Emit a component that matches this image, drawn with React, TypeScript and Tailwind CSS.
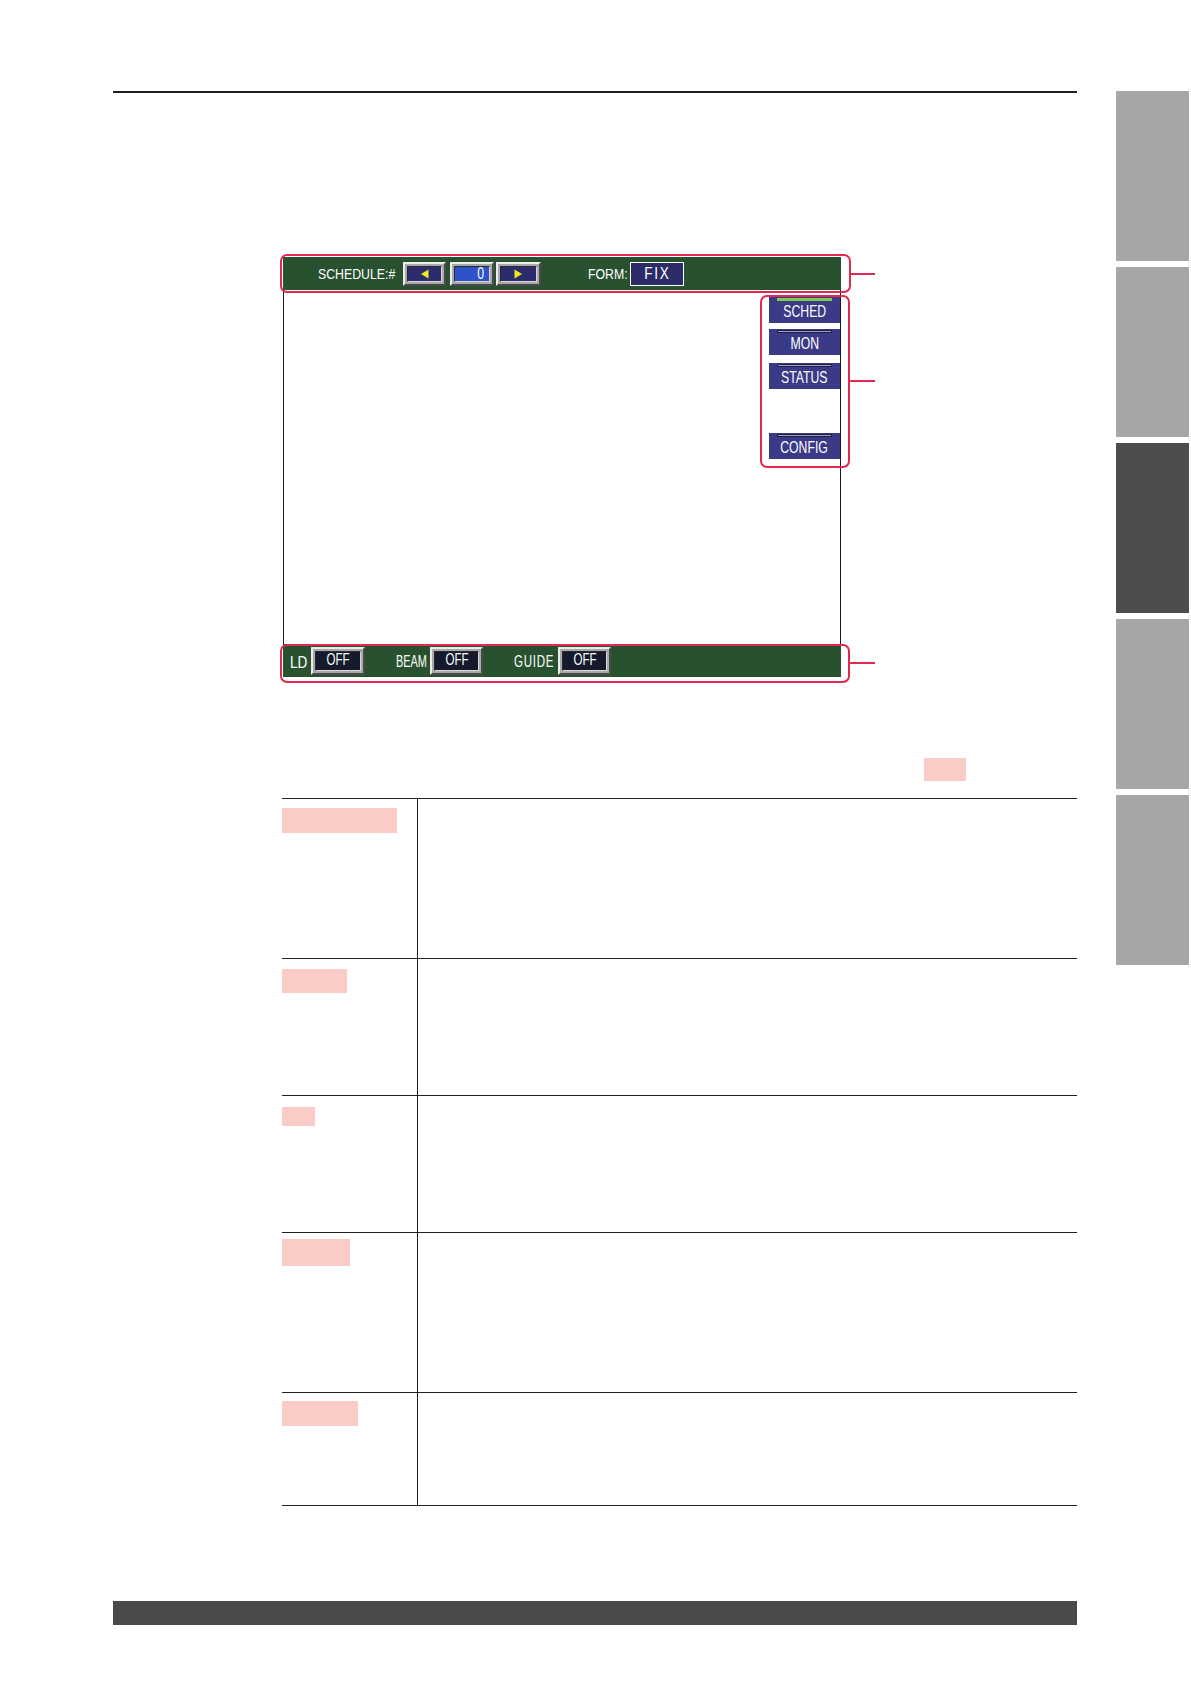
import React from "react";

const font = "font-['Liberation_Sans',Arial,sans-serif]";

function Tri({ dir }: { dir: "l" | "r" }) {
  return (
    <svg width="9" height="10" viewBox="0 0 9 10">
      {dir === "l" ? (
        <polygon points="8.5,0.5 8.5,9.5 1,5" fill="#ecec1e" />
      ) : (
        <polygon points="0.5,0.5 0.5,9.5 8,5" fill="#ecec1e" />
      )}
    </svg>
  );
}

function Bevel({
  className,
  innerClass,
  children,
}: {
  className: string;
  innerClass: string;
  children?: React.ReactNode;
}) {
  return (
    <div
      className={`flex border-2 border-t-[#ececec] border-l-[#ececec] border-b-[#4a4a4a] border-r-[#4a4a4a] bg-[#a9a9a9] p-[2px] ${className}`}
    >
      <div
        className={`flex flex-1 items-center border border-t-[#2a2a2a] border-l-[#2a2a2a] border-b-[#d8d8d8] border-r-[#d8d8d8] ${innerClass}`}
      >
        {children}
      </div>
    </div>
  );
}

function SideBtn({
  label,
  active,
  className,
}: {
  label: string;
  active?: boolean;
  className: string;
}) {
  return (
    <div
      className={`flex h-[26px] w-[71px] flex-col items-center bg-[#3a3a86] pt-[1px] ${className}`}
    >
      <div
        className={
          active
            ? "h-[3px] w-[55px] bg-[#7fcb52]"
            : "h-[3px] w-[55px] border border-[#1c1c48] bg-[#a3a7ba]"
        }
      />
      <span className="mt-[2px] inline-block scale-x-[0.72] text-[17px] leading-none text-white">
        {label}
      </span>
    </div>
  );
}

function Off({ className }: { className: string }) {
  return (
    <Bevel className={`h-[28px] ${className}`} innerClass="justify-center bg-[#151a2c]">
      <span className="mb-[3px] inline-block scale-x-[0.68] text-[17px] leading-none text-white">
        OFF
      </span>
    </Bevel>
  );
}

export default function App() {
  const rows = [
    { h: "h-[160px]", label: "mt-[9px] h-[25px] w-[115px]" },
    { h: "h-[137px]", label: "mt-[10px] h-[24px] w-[65px]" },
    { h: "h-[137px]", label: "mt-[11px] h-[19px] w-[33px]" },
    { h: "h-[160px]", label: "mt-[6px] h-[27px] w-[68px]" },
    { h: "h-[113px]", label: "mt-[8px] h-[25px] w-[76px]" },
  ];
  return (
    <div className={`flex min-h-[1684px] w-[1191px] bg-white ${font}`}>
      {/* main column */}
      <div className="ml-[113px] flex w-[964px] flex-col pt-[91px]">
        <div className="h-[2px] w-full bg-[#231f20]" />

        {/* screen */}
        <div className="relative ml-[170px] mt-[164px] w-[558px]">
          <div className="flex h-[33px] items-center bg-[#28522f] text-white">
            <div className="ml-[35px] w-[85px]">
              <span className="inline-block origin-left scale-x-[0.82] text-[15px] leading-none">
                SCHEDULE:#
              </span>
            </div>
            <Bevel className="h-[24px] w-[43px]" innerClass="justify-center bg-[#2b2b6e]">
              <Tri dir="l" />
            </Bevel>
            <Bevel className="ml-[4px] h-[24px] w-[44px]" innerClass="justify-end bg-[#2f52c8] pr-[4px]">
              <span className="inline-block scale-x-[0.72] text-[17px] leading-none text-white">0</span>
            </Bevel>
            <Bevel className="ml-[2px] h-[24px] w-[45px]" innerClass="justify-center bg-[#2b2b6e]">
              <Tri dir="r" />
            </Bevel>
            <div className="ml-[47px] w-[42px]">
              <span className="inline-block origin-left scale-x-[0.82] text-[15px] leading-none">
                FORM:
              </span>
            </div>
            <div className="flex h-[24px] w-[54px] items-center justify-center border border-white bg-[#2b2b68]">
              <span className="inline-block scale-x-[0.85] text-[16px] leading-none tracking-[2px]">FIX</span>
            </div>
          </div>

          <div className="flex h-[354px] justify-end border-x border-[#1a1a1a] bg-white">
            <div className="flex w-[71px] flex-col pt-[7px]">
              <SideBtn label="SCHED" active className="" />
              <SideBtn label="MON" className="mt-[6px]" />
              <SideBtn label="STATUS" className="mt-[8px]" />
              <SideBtn label="CONFIG" className="mt-[44px]" />
            </div>
          </div>

          <div className="flex h-[33px] items-center bg-[#28522f] text-white">
            <div className="ml-[7px] mt-[5px] w-[21px]">
              <span className="inline-block origin-left scale-x-[0.8] text-[17px] leading-none">LD</span>
            </div>
            <Off className="w-[54px]" />
            <div className="ml-[31px] mt-[3px] w-[34px]">
              <span className="inline-block origin-left scale-x-[0.68] text-[16px] leading-none">BEAM</span>
            </div>
            <Off className="w-[53px]" />
            <div className="ml-[31px] mt-[3px] w-[44px]">
              <span className="inline-block origin-left scale-x-[0.72] text-[16px] leading-none tracking-[1px]">
                GUIDE
              </span>
            </div>
            <Off className="w-[53px]" />
          </div>

          {/* annotation frames */}
          <div className="absolute left-[-3px] top-[-3px] h-[39px] w-[571px] rounded-[7px] border-2 border-[#e3284f]" />
          <div className="absolute left-[477px] top-[38px] h-[173px] w-[90px] rounded-[7px] border-2 border-[#e3284f]" />
          <div className="absolute left-[-3px] top-[387px] h-[39px] w-[570px] rounded-[7px] border-2 border-[#e3284f]" />
          <div className="absolute left-[568px] top-[16px] h-[2px] w-[24px] bg-[#e3284f]" />
          <div className="absolute left-[567px] top-[123px] h-[2px] w-[25px] bg-[#e3284f]" />
          <div className="absolute left-[567px] top-[405px] h-[2px] w-[25px] bg-[#e3284f]" />
        </div>

        {/* small pink marker */}
        <div className="ml-[811px] mt-[81px] h-[23px] w-[42px] bg-[#fbcbc7]" />

        {/* table */}
        <div className="ml-[169px] mt-[17px] w-[795px] border-t border-[#231f20]">
          {rows.map((r, i) => (
            <div key={i} className={`flex border-b border-[#231f20] ${r.h}`}>
              <div className="w-[136px] border-r border-[#231f20]">
                <div className={`bg-[#fbcbc7] ${r.label}`} />
              </div>
              <div className="flex-1" />
            </div>
          ))}
        </div>

        {/* bottom bar */}
        <div className="mt-[95px] h-[24px] w-full bg-[#4a4a4a]" />
      </div>

      {/* side tabs */}
      <div className="ml-[39px] flex w-[73px] flex-col gap-[6px] pt-[91px]">
        <div className="h-[170px] bg-[#a7a5a6]" />
        <div className="h-[170px] bg-[#a7a5a6]" />
        <div className="h-[170px] bg-[#4d4b4c]" />
        <div className="h-[170px] bg-[#a7a5a6]" />
        <div className="h-[170px] bg-[#a7a5a6]" />
      </div>
    </div>
  );
}
